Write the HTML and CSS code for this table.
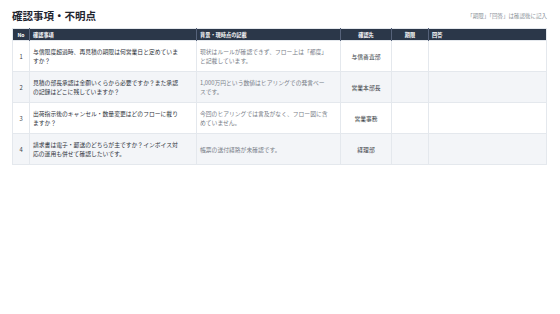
FILE: index.html
```html
<!DOCTYPE html>
<html lang="ja">
<head>
<meta charset="utf-8">
<title>確認事項・不明点</title>
<link rel="stylesheet" href="styles.css">
</head>
<body>
<div class="page">
  <div class="head">
    <h1 class="title">確認事項・不明点</h1>
    <p class="note">「期限」「回答」は確認後に記入</p>
  </div>
  <table class="qa">
    <colgroup>
      <col class="c-no">
      <col class="c-q">
      <col class="c-bg">
      <col class="c-to">
      <col class="c-due">
      <col class="c-ans">
    </colgroup>
    <thead>
      <tr>
        <th class="center">No</th>
        <th>確認事項</th>
        <th>背景・現時点の記載</th>
        <th class="center">確認先</th>
        <th class="center">期限</th>
        <th>回答</th>
      </tr>
    </thead>
    <tbody>
      <tr>
        <td class="no">1</td>
        <td class="q">与信限度超過時、再見積の期限は何営業日と定めていますか？</td>
        <td class="bg">現状はルールが確認できず、フロー上は「都度」と記載しています。</td>
        <td class="to">与信審査部</td>
        <td></td>
        <td></td>
      </tr>
      <tr>
        <td class="no">2</td>
        <td class="q">見積の部長承認は金額いくらから必要ですか？また承認の記録はどこに残していますか？</td>
        <td class="bg">1,000万円という数値はヒアリングでの発言ベースです。</td>
        <td class="to">営業本部長</td>
        <td></td>
        <td></td>
      </tr>
      <tr>
        <td class="no">3</td>
        <td class="q">出荷指示後のキャンセル・数量変更はどのフローに載りますか？</td>
        <td class="bg">今回のヒアリングでは言及がなく、フロー図に含めていません。</td>
        <td class="to">営業事務</td>
        <td></td>
        <td></td>
      </tr>
      <tr>
        <td class="no">4</td>
        <td class="q">請求書は電子・郵送のどちらが主ですか？インボイス対応の運用も併せて確認したいです。</td>
        <td class="bg">帳票の送付経路が未確認です。</td>
        <td class="to">経理部</td>
        <td></td>
        <td></td>
      </tr>
    </tbody>
  </table>
</div>
</body>
</html>
```

FILE: styles.css
```css
html, body {
  margin: 0;
  padding: 0;
  background: #ffffff;
}

body {
  font-family: "Noto Sans CJK JP", "Noto Sans", sans-serif;
  color: #2b2f36;
}

.page {
  padding: 8px 12px 0 12px;
}

.head {
  display: flex;
  justify-content: space-between;
  align-items: center;
}

.title {
  margin: 0;
  font-size: 10.5px;
  line-height: 15px;
  font-weight: 700;
  color: #1f2530;
}

.note {
  margin: 0;
  font-size: 5.5px;
  line-height: 8px;
  color: #8a8f98;
  padding-right: 1px;
}

.qa {
  margin-top: 5px;
  width: 535px;
  border-collapse: collapse;
  table-layout: fixed;
  border: 1px solid #e4e8ed;
}

.c-no { width: 17px; }
.c-q { width: 167px; }
.c-bg { width: 144px; }
.c-to { width: 51px; }
.c-due { width: 37px; }

.qa th {
  background: #2b3749;
  color: #ffffff;
  font-size: 5.2px;
  line-height: 8px;
  font-weight: 700;
  text-align: left;
  padding: 1.5px 3px;
  border-left: 1px solid #56627a;
}

.qa th:first-child {
  border-left: none;
}

.qa th.center {
  text-align: center;
}

.qa td {
  font-size: 5.8px;
  line-height: 9px;
  padding: 6px 3px;
  border: 1px solid #e4e8ed;
  vertical-align: middle;
}

.qa tbody tr:nth-child(even) td {
  background: #f3f5f8;
}

.qa td.no {
  text-align: center;
  color: #3a3f47;
}

.qa td.q {
  color: #2f343c;
  padding-right: 16px;
}

.qa td.bg {
  color: #7a8089;
  padding-right: 10px;
}

.qa td.to {
  text-align: center;
  color: #3a3f47;
}
```
